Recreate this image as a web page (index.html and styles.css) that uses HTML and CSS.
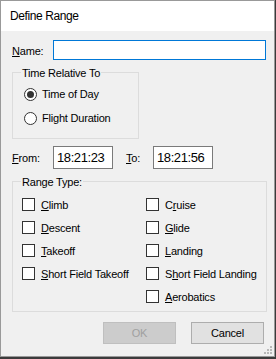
FILE: index.html
```html
<!DOCTYPE html>
<html lang="en">
<head>
  <meta charset="UTF-8">
  <title>Define Range</title>
  <meta name="viewport" content="width=device-width, initial-scale=1.0">
  <link rel="stylesheet" href="styles.css">
</head>
<body>
  <div class="window">
    <div class="titlebar">Define Range</div>
    <div class="client">

      <div class="row name-row">
        <label class="label name-label"><u>N</u>ame:</label>
        <div class="textbox name-box"></div>
      </div>

      <div class="group time-group">
        <div class="group-title">Time Relative To</div>
        <div class="option"><span class="radio checked"></span>Time of Day</div>
        <div class="option"><span class="radio"></span>Flight Duration</div>
      </div>

      <div class="row time-row">
        <label class="label from-label"><u>F</u>rom:</label>
        <div class="textbox time-box">18:21:23</div>
        <label class="label to-label"><u>T</u>o:</label>
        <div class="textbox time-box">18:21:56</div>
      </div>

      <div class="group range-group">
        <div class="group-title">Range Type:</div>
        <div class="check-cols">
          <div class="check-col left-col">
            <div class="check"><span class="box"></span><span><u>C</u>limb</span></div>
            <div class="check"><span class="box"></span><span><u>D</u>escent</span></div>
            <div class="check"><span class="box"></span><span><u>T</u>akeoff</span></div>
            <div class="check"><span class="box"></span><span><u>S</u>hort Field Takeoff</span></div>
          </div>
          <div class="check-col">
            <div class="check"><span class="box"></span><span>C<u>r</u>uise</span></div>
            <div class="check"><span class="box"></span><span><u>G</u>lide</span></div>
            <div class="check"><span class="box"></span><span><u>L</u>anding</span></div>
            <div class="check"><span class="box"></span><span>S<u>h</u>ort Field Landing</span></div>
            <div class="check"><span class="box"></span><span><u>A</u>erobatics</span></div>
          </div>
        </div>
      </div>

      <div class="buttons">
        <button class="btn disabled" disabled>OK</button>
        <button class="btn">Cancel</button>
      </div>
    </div>

    <svg class="grip" width="8" height="8" viewBox="0 0 8 8">
      <rect x="6" y="0" width="2" height="2" fill="#b8b8b8"/>
      <rect x="3" y="3" width="2" height="2" fill="#b8b8b8"/>
      <rect x="6" y="3" width="2" height="2" fill="#b8b8b8"/>
      <rect x="0" y="6" width="2" height="2" fill="#b8b8b8"/>
      <rect x="3" y="6" width="2" height="2" fill="#b8b8b8"/>
      <rect x="6" y="6" width="2" height="2" fill="#b8b8b8"/>
    </svg>
  </div>
</body>
</html>
```

FILE: styles.css
```css
body {
  margin: 0;
  padding: 0;
  background-color: #3b3b3b;
  font-family: 'Liberation Sans', Arial, sans-serif;
  font-size: 11px;
  color: #000;
}

.window {
  position: relative;
  box-sizing: border-box;
  width: 275px;
  height: 357px;
  border: 1px solid #999;
  background-color: #f0f0f0;
}

.titlebar {
  height: 30px;
  line-height: 30px;
  padding-left: 9px;
  background-color: #fff;
  font-size: 12px;
  letter-spacing: -0.4px;
}

.client {
  padding-left: 11px;
  letter-spacing: -0.2px;
}

u {
  text-decoration-thickness: 1px;
  text-underline-offset: 1px;
}

.row {
  display: flex;
  align-items: center;
}

.label {
  padding-top: 1px;
}

.name-row {
  margin-top: 9px;
  height: 20px;
}

.name-label,
.from-label {
  width: 41px;
}

.to-label {
  width: 27px;
  margin-left: 13px;
}

.textbox {
  box-sizing: border-box;
  background-color: #fff;
  border: 1px solid #7a7a7a;
}

.name-box {
  width: 213px;
  height: 20px;
  border-color: #0078d7;
}

.time-row {
  margin-top: 7px;
  height: 23px;
}

.time-box {
  width: 60px;
  height: 23px;
  line-height: 21px;
  padding-left: 3px;
  font-size: 13px;
  letter-spacing: -0.4px;
}

.group {
  box-sizing: border-box;
  border: 1px solid #dcdcdc;
}

.group-title {
  width: fit-content;
  height: 14px;
  line-height: 14px;
  margin-top: -7px;
  margin-left: 8px;
  padding: 0 1px;
  background-color: #f0f0f0;
}

.time-group {
  width: 127px;
  height: 67px;
  margin-top: 12px;
}

.time-group .group-title {
  margin-bottom: 2px;
}

.option {
  display: flex;
  align-items: center;
  height: 24px;
  padding-left: 11px;
}

.radio {
  box-sizing: border-box;
  width: 13px;
  height: 13px;
  margin-right: 5px;
  border: 1px solid #333;
  border-radius: 50%;
  background-color: #fff;
  display: flex;
  align-items: center;
  justify-content: center;
}

.radio.checked::after {
  content: '';
  width: 7px;
  height: 7px;
  border-radius: 50%;
  background-color: #333;
}

.range-group {
  width: 255px;
  height: 131px;
  margin-top: 12px;
}

.check-cols {
  display: flex;
  padding-top: 4px;
  padding-left: 9px;
}

.left-col {
  width: 124px;
}

.check {
  display: flex;
  align-items: center;
  height: 23px;
}

.box {
  box-sizing: border-box;
  width: 13px;
  height: 13px;
  margin-right: 6px;
  border: 1px solid #333;
  background-color: #fff;
}

.buttons {
  display: flex;
  gap: 15px;
  margin-top: 10px;
  padding-left: 91px;
}

.btn {
  box-sizing: border-box;
  width: 73px;
  height: 22px;
  padding: 0;
  border: 1px solid #adadad;
  background-color: #e1e1e1;
  font-family: 'Liberation Sans', Arial, sans-serif;
  font-size: 11px;
  letter-spacing: -0.2px;
  color: #000;
}

.btn.disabled {
  border-color: #bfbfbf;
  background-color: #cccccc;
  color: #a0a0a0;
}

.grip {
  position: absolute;
  right: 2px;
  bottom: 2px;
}
```
